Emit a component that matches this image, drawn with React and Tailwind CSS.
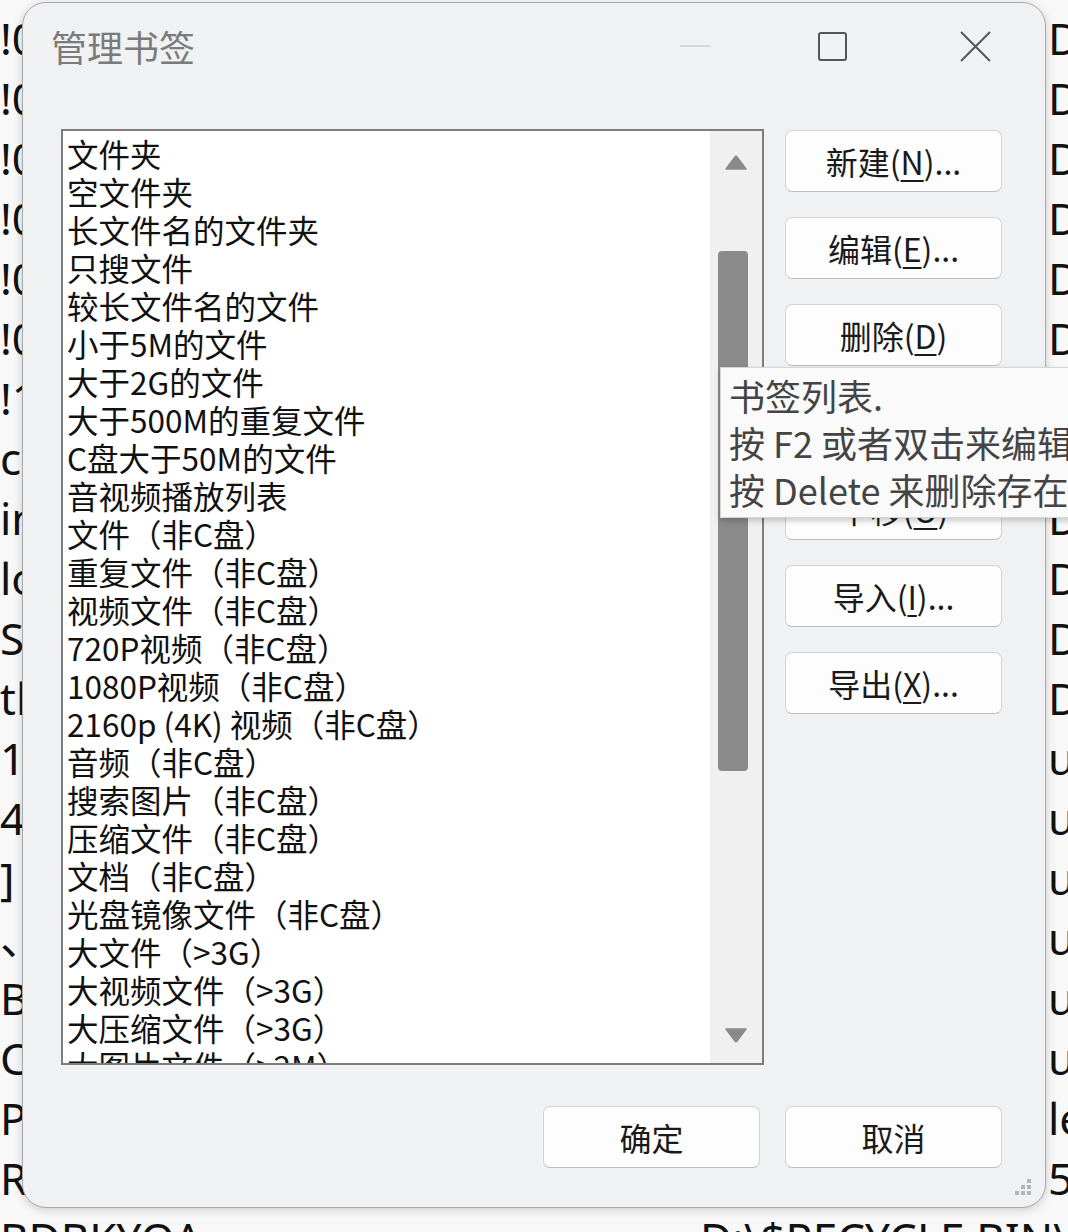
import React from 'react';

const items = [
  '文件夹',
  '空文件夹',
  '长文件名的文件夹',
  '只搜文件',
  '较长文件名的文件',
  '小于5M的文件',
  '大于2G的文件',
  '大于500M的重复文件',
  'C盘大于50M的文件',
  '音视频播放列表',
  '文件（非C盘）',
  '重复文件（非C盘）',
  '视频文件（非C盘）',
  '720P视频（非C盘）',
  '1080P视频（非C盘）',
  '2160p (4K) 视频（非C盘）',
  '音频（非C盘）',
  '搜索图片（非C盘）',
  '压缩文件（非C盘）',
  '文档（非C盘）',
  '光盘镜像文件（非C盘）',
  '大文件（>3G）',
  '大视频文件（>3G）',
  '大压缩文件（>3G）',
  '大图片文件（>2M）',
];

// rows of the window behind the dialog
const backRows = [
  ['!00', 'D:\\'], ['!00', 'D:\\'], ['!00', 'D:\\'], ['!00', 'D:\\'], ['!00', 'D:\\'],
  ['!00', 'D:\\'], ['!1', 'D:\\'], ['ca', 'D:\\'], ['in', 'D:\\'], ['lo', 'D:\\'],
  ['S', 'D:\\'], ['tb', 'D:\\'], ['1', 'ur'], ['4', 'ur'], [']', 'ur'],
  ['、', 'ur'], ['B', 'ur'], ['C', 'ur'], ['P', 'le'], ['R', '5'],
];

const cjk = { fontFamily: '"Noto Sans CJK SC", "Noto Sans", sans-serif' };
const latin = { fontFamily: '"Noto Sans", "Noto Sans CJK SC", sans-serif' };

const Btn = ({ children }) => (
  <button className="w-[217px] h-[62px] rounded-[7px] border border-[#d3d3d3] border-b-[#bdbdbd] bg-[#fdfdfd] text-[32px] text-[#1a1a1a] flex items-center justify-center leading-none">
    {children}
  </button>
);

const Key = ({ k }) => <u className="underline underline-offset-[5px] decoration-2">{k}</u>;

const Arrow = ({ down }) => (
  <svg width="24" height="15" viewBox="0 0 24 15" className="mx-auto">
    <path
      d={down ? 'M2 1 L22 1 L13 13 Q12 14.5 11 13 Z' : 'M2 14 L22 14 L13 2 Q12 0.5 11 2 Z'}
      fill="#8a8a8a"
      stroke="#8a8a8a"
      strokeLinejoin="round"
      strokeWidth="1.5"
    />
  </svg>
);

export default function App() {
  return (
    <div className="relative w-[1068px] h-[1232px] overflow-hidden bg-[#f8f8f8] text-black" style={latin}>
      {/* background window */}
      <div className="pt-[8px] text-[44px] leading-[60px] text-[#111]">
        {backRows.map(([l, r], i) => (
          <div key={i} className="grid grid-cols-[1048px_1fr] h-[60px] whitespace-nowrap">
            <span>{l}</span>
            <span>{r}</span>
          </div>
        ))}
        <div className="grid grid-cols-[700px_1fr] h-[60px] whitespace-nowrap">
          <span>BDBKYOA</span>
          <span>D:\$RECYCLE.BIN\S-1</span>
        </div>
      </div>

      {/* dialog */}
      <div
        className="absolute left-[22px] top-[2px] w-[1024px] h-[1206px] rounded-[24px] border border-[#a9a9a9] bg-[#f0f1f3] shadow-[0_2px_10px_rgba(0,0,0,0.18)] flex flex-col"
        style={cjk}
      >
        <div className="h-[86px] flex items-center pl-[28px]">
          <span className="text-[36px] text-[#7a7a7a] leading-none">管理书签</span>
          <div className="ml-auto flex items-center">
            <div className="w-[140px] flex justify-center">
              <div className="w-[30px] h-[2px] bg-[#d6d7da]" />
            </div>
            <div className="w-[140px] flex justify-center pr-[6px]">
              <div className="w-[29px] h-[29px] border-2 border-[#555] rounded-[3px]" />
            </div>
            <div className="w-[140px] flex justify-center">
              <svg width="31" height="31" viewBox="0 0 31 31">
                <path d="M1 1 L30 30 M30 1 L1 30" stroke="#555" strokeWidth="2" />
              </svg>
            </div>
          </div>
        </div>

        <div className="mt-[40px] flex pl-[38px] pr-[43px] gap-[21px]">
          <div className="w-[704px] h-[936px] border-2 border-[#7d7d7d] bg-white flex">
            <div className="flex-1 overflow-hidden pt-[3px] pl-[4px]">
              {items.map((t) => (
                <div key={t} className="h-[38px] leading-[38px] text-[31.5px] whitespace-nowrap text-[#111]">
                  {t}
                </div>
              ))}
            </div>
            <div className="w-[52px] bg-[#f0f0f0] flex flex-col">
              <div className="mt-[24px]">
                <Arrow />
              </div>
              <div className="mt-[81px] ml-[8px] w-[30px] h-[520px] rounded-[4px] bg-[#8a8a8a]" />
              <div className="flex-1" />
              <div className="mb-[20px]">
                <Arrow down />
              </div>
            </div>
          </div>

          <div className="flex flex-col gap-[25px] pt-[1px]">
            <Btn>新建(<Key k="N" />)...</Btn>
            <Btn>编辑(<Key k="E" />)...</Btn>
            <Btn>删除(<Key k="D" />)</Btn>
            <Btn>上移(<Key k="U" />)</Btn>
            <Btn>下移(<Key k="O" />)</Btn>
            <Btn>导入(<Key k="I" />)...</Btn>
            <Btn>导出(<Key k="X" />)...</Btn>
          </div>
        </div>

        <div className="mt-[41px] flex justify-end gap-[25px] pr-[43px]">
          <Btn>确定</Btn>
          <Btn>取消</Btn>
        </div>

        <svg className="absolute right-[12px] bottom-[10px]" width="20" height="20" viewBox="0 0 20 20">
          {[[16, 4], [10, 10], [16, 10], [4, 16], [10, 16], [16, 16]].map(([x, y]) => (
            <rect key={`${x}-${y}`} x={x - 2} y={y - 2} width="4" height="4" fill="#b4b4b4" />
          ))}
        </svg>
      </div>

      {/* tooltip */}
      <div
        className="absolute left-[720px] top-[367px] w-[420px] h-[151px] bg-[#fafafa] border border-[#d6d6d6] shadow-[0_3px_6px_rgba(0,0,0,0.2)] pl-[8px] pt-[4px] text-[36px] leading-[47px] text-[#444] whitespace-nowrap"
        style={cjk}
      >
        <div>书签列表.</div>
        <div>按 F2 或者双击来编辑书签</div>
        <div>按 Delete 来删除存在的书签</div>
      </div>
    </div>
  );
}
